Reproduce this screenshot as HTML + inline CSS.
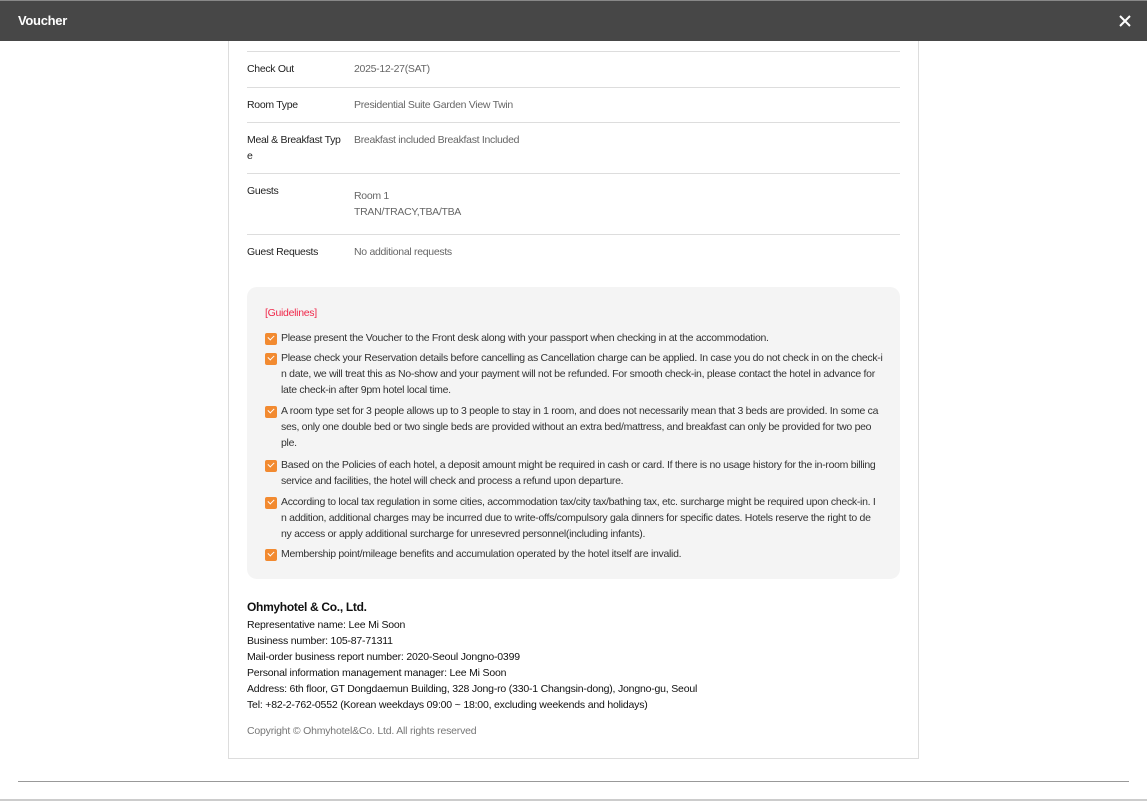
<!DOCTYPE html>
<html><head><meta charset="utf-8"><style>
*{margin:0;padding:0;box-sizing:border-box}
body{width:1147px;height:801px;background:#fff;font-family:"Liberation Sans",sans-serif;position:relative;overflow:hidden;color:#222}
.top{position:absolute;left:0;top:0;width:1147px;height:41px;background:#474747;border-top:1px solid #888}
.top b{position:absolute;left:18px;top:12px;color:#fff;font-size:13px;letter-spacing:-0.3px}
.card{position:absolute;left:228px;top:41px;width:691px;height:718px;border:1px solid #ddd;border-top:none}
.t{position:absolute;font-size:10.5px;letter-spacing:-0.3px;white-space:nowrap;line-height:16px}
.lbl{color:#222}.val{color:#666}
.hl{position:absolute;left:247px;width:653px;height:1px;background:#ddd}
.box{position:absolute;left:247px;top:287px;width:653px;height:292px;background:#f4f4f4;border-radius:10px}
.g{position:absolute;left:281px;font-size:10.5px;letter-spacing:-0.3px;line-height:16px;white-space:nowrap;color:#333}
.cb{position:absolute;left:265px;width:12px;height:12px;background:#f28a30;border-radius:2px}
.cb:after{content:"";position:absolute;left:3px;top:2px;width:5px;height:3px;border-left:1.5px solid #fff;border-bottom:1.5px solid #fff;transform:rotate(-45deg)}
.f{position:absolute;left:247px;font-size:10.5px;letter-spacing:-0.2px;white-space:nowrap;line-height:16px;color:#111}
</style></head><body>
<div class="top"><b>Voucher</b>
<svg style="position:absolute;left:1119px;top:14px" width="12" height="12" viewBox="0 0 12 12"><path d="M1 1L11 11M11 1L1 11" stroke="#fff" stroke-width="2"/></svg></div>
<div class="card"></div>
<div class="hl" style="top:51px"></div>
<div class="t lbl" style="left:247px;top:61px">Check Out</div><div class="t val" style="left:354px;top:61px">2025-12-27(SAT)</div>
<div class="hl" style="top:87px"></div>
<div class="t lbl" style="left:247px;top:97px">Room Type</div><div class="t val" style="left:354px;top:97px">Presidential Suite Garden View Twin</div>
<div class="hl" style="top:122px"></div>
<div class="t lbl" style="left:247px;top:132px">Meal &amp; Breakfast Typ<br>e</div><div class="t val" style="left:354px;top:132px">Breakfast included Breakfast Included</div>
<div class="hl" style="top:173px"></div>
<div class="t lbl" style="left:247px;top:183px">Guests</div><div class="t val" style="left:354px;top:188px">Room 1<br>TRAN/TRACY,TBA/TBA</div>
<div class="hl" style="top:234px"></div>
<div class="t lbl" style="left:247px;top:244px">Guest Requests</div><div class="t val" style="left:354px;top:244px">No additional requests</div>
<div class="box"></div>
<div class="t" style="left:265px;top:305px;color:#f0284a">[Guidelines]</div>
<div class="cb" style="top:333px"></div><div class="g" style="top:330px">Please present the Voucher to the Front desk along with your passport when checking in at the accommodation.</div>
<div class="cb" style="top:353px"></div><div class="g" style="top:350px">Please check your Reservation details before cancelling as Cancellation charge can be applied. In case you do not check in on the check-i<br>n date, we will treat this as No-show and your payment will not be refunded. For smooth check-in, please contact the hotel in advance for<br>late check-in after 9pm hotel local time.</div>
<div class="cb" style="top:406px"></div><div class="g" style="top:403px">A room type set for 3 people allows up to 3 people to stay in 1 room, and does not necessarily mean that 3 beds are provided. In some ca<br>ses, only one double bed or two single beds are provided without an extra bed/mattress, and breakfast can only be provided for two peo<br>ple.</div>
<div class="cb" style="top:460px"></div><div class="g" style="top:457px">Based on the Policies of each hotel, a deposit amount might be required in cash or card. If there is no usage history for the in-room billing<br>service and facilities, the hotel will check and process a refund upon departure.</div>
<div class="cb" style="top:497px"></div><div class="g" style="top:494px">According to local tax regulation in some cities, accommodation tax/city tax/bathing tax, etc. surcharge might be required upon check-in. I<br>n addition, additional charges may be incurred due to write-offs/compulsory gala dinners for specific dates. Hotels reserve the right to de<br>ny access or apply additional surcharge for unresevred personnel(including infants).</div>
<div class="cb" style="top:549px"></div><div class="g" style="top:546px">Membership point/mileage benefits and accumulation operated by the hotel itself are invalid.</div>
<div class="f" style="top:599px;font-size:12px;font-weight:bold;letter-spacing:-0.3px">Ohmyhotel &amp; Co., Ltd.</div>
<div class="f" style="top:617px">Representative name: Lee Mi Soon<br>Business number: 105-87-71311<br>Mail-order business report number: 2020-Seoul Jongno-0399<br>Personal information management manager: Lee Mi Soon<br>Address: 6th floor, GT Dongdaemun Building, 328 Jong-ro (330-1 Changsin-dong), Jongno-gu, Seoul<br>Tel: +82-2-762-0552 (Korean weekdays 09:00 ~ 18:00, excluding weekends and holidays)</div>
<div class="f" style="top:723px;color:#777">Copyright © Ohmyhotel&amp;Co. Ltd. All rights reserved</div>
<div style="position:absolute;left:18px;top:781px;width:1111px;height:1px;background:#999"></div>
<div style="position:absolute;left:0;top:799px;width:1147px;height:2px;background:#ccc"></div>
</body></html>
